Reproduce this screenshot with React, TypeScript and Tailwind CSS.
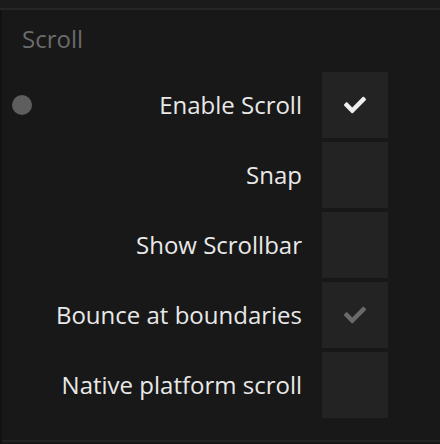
import { FaCheck } from "react-icons/fa";

type Row = { label: string; checked?: boolean; dim?: boolean; dot?: boolean };

const rows: Row[] = [
  { label: "Enable Scroll", checked: true, dot: true },
  { label: "Snap" },
  { label: "Show Scrollbar" },
  { label: "Bounce at boundaries", checked: true, dim: true },
  { label: "Native platform scroll" },
];

export default function App() {
  return (
    <div
      className="w-[440px] h-[444px] bg-[#181818] flex flex-col overflow-hidden"
      style={{ fontFamily: '"Open Sans", "Noto Sans", sans-serif' }}
    >
      <div className="h-[8px] bg-[#1b1b1b] shrink-0" />
      <div className="h-[2px] bg-[#262626] shrink-0" />
      <div className="flex-1 flex flex-col border-l-2 border-[#121212]">
        <div className="h-[62px] pl-5 pt-[13px] text-[24px] leading-[32px] text-[#6b6b6b]">
          Scroll
        </div>
        <div className="flex flex-col gap-1">
          {rows.map((r) => (
            <div key={r.label} className="relative flex items-center justify-end h-[66px] pr-[52px]">
              {r.dot && (
                <span className="absolute left-[10px] top-[23px] w-5 h-5 rounded-full bg-[#5e5e5e]" />
              )}
              <span className="text-[24px] leading-[32px] text-[#e8e8e8] mr-[20px]">{r.label}</span>
              <div className="w-[66px] h-[66px] bg-[#232323] flex items-center justify-center">
                {r.checked && (
                  <FaCheck className={`w-[22px] h-[22px] ${r.dim ? "text-[#6a6a6a]" : "text-[#eeeeee]"}`} />
                )}
              </div>
            </div>
          ))}
        </div>
        <div className="flex-1" />
        <div className="h-[2px] bg-[#222222]" />
        <div className="h-[2px] bg-[#161616]" />
      </div>
    </div>
  );
}
